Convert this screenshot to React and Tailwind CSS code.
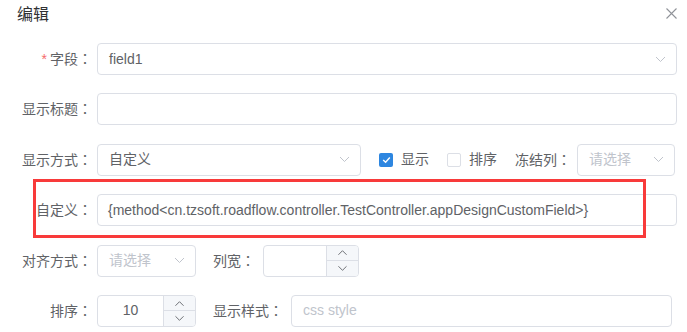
const font = { fontFamily: '"Liberation Sans", "Noto Sans CJK SC", sans-serif' };

// YaHei centres the full-width colon; SC pushes it left, JP centres it
function Colon() {
  return <span className="font-['Noto_Sans_CJK_JP',sans-serif]">：</span>;
}

function Chevron({ up = false, className = '' }) {
  return (
    <svg width="11" height="7" viewBox="0 0 11 7" className={className}>
      <path
        d={up ? 'M1 6 L5.5 1.5 L10 6' : 'M1 1 L5.5 5.5 L10 1'}
        fill="none"
        stroke="currentColor"
        strokeWidth="1"
      />
    </svg>
  );
}

function Label({ children, required }) {
  return (
    <div className="w-[92px] mr-[5px] shrink-0 text-right text-[14px] text-[#606266] [text-spacing-trim:space-all]">
      {required && <span className="text-[#f56c6c] mr-[3px]">*</span>}
      {children}
      <Colon />
    </div>
  );
}

function Select({ value, placeholder, className = '' }) {
  return (
    <div
      className={`h-8 flex items-center justify-between border border-[#dcdfe6] rounded-[4px] pl-[11px] pr-[10px] ${className}`}
    >
      <span className={`text-[14px] ${value ? 'text-[#606266]' : 'text-[#c0c4cc]'}`}>
        {value || placeholder}
      </span>
      <Chevron className="text-[#c0c4cc]" />
    </div>
  );
}

function NumberInput({ value, className = '' }) {
  return (
    <div className={`h-8 flex border border-[#dcdfe6] rounded-[4px] overflow-hidden ${className}`}>
      <div className="flex-1 flex items-center justify-center text-[14px] text-[#606266]">{value}</div>
      <div className="w-[32px] flex flex-col border-l border-[#dcdfe6] bg-[#f5f7fa] text-[#606266]">
        <div className="flex-1 flex items-center justify-center border-b border-[#dcdfe6]">
          <Chevron up className="scale-90" />
        </div>
        <div className="flex-1 flex items-center justify-center">
          <Chevron className="scale-90" />
        </div>
      </div>
    </div>
  );
}

function Checkbox({ checked, label }) {
  return (
    <div className="flex items-center">
      {checked ? (
        <div className="w-[14px] h-[14px] rounded-[2px] bg-[#2d86e0] flex items-center justify-center">
          <svg width="9" height="8" viewBox="0 0 9 8">
            <path d="M1.2 4 L3.6 6.3 L7.8 1.5" fill="none" stroke="white" strokeWidth="1.4" />
          </svg>
        </div>
      ) : (
        <div className="w-[14px] h-[14px] rounded-[2px] border border-[#dcdfe6] bg-white" />
      )}
      <span className="ml-[8px] text-[14px] text-[#606266]">{label}</span>
    </div>
  );
}

export default function App() {
  return (
    <div className="w-[687px] h-[332px] bg-white relative overflow-hidden" style={font}>
      <div className="h-[43px] flex justify-between items-start pl-[17px] pr-[10px]">
        <div className="mt-[5px] text-[16px] leading-[20px] text-[#303133]">编辑</div>
        <svg width="11" height="11" viewBox="0 0 11 11" className="mt-[8px] text-[#909399]">
          <path d="M0.5 0.5 L10.5 10.5 M10.5 0.5 L0.5 10.5" stroke="currentColor" strokeWidth="1.1" />
        </svg>
      </div>

      <div className="flex flex-col gap-[18.4px]">
        <div className="flex items-center">
          <Label required>字段</Label>
          <Select value="field1" className="w-[580px]" />
        </div>

        <div className="flex items-center">
          <Label>显示标题</Label>
          <div className="h-8 w-[580px] border border-[#dcdfe6] rounded-[4px]" />
        </div>

        <div className="flex items-center">
          <Label>显示方式</Label>
          <Select value="自定义" className="w-[264px]" />
          <div className="ml-[18px] flex items-center">
            <Checkbox checked label="显示" />
          </div>
          <div className="ml-[18px]">
            <Checkbox label="排序" />
          </div>
          <span className="ml-[18px] w-[56px] text-[14px] text-[#606266] [text-spacing-trim:space-all]">
            冻结列<Colon />
          </span>
          <Select placeholder="请选择" className="ml-[6px] w-[98px]" />
        </div>

        <div className="flex items-center">
          <Label>自定义</Label>
          <div className="h-8 w-[580px] flex items-center border border-[#dcdfe6] rounded-[4px] px-[10px] text-[14px] text-[#606266]">
            {'{method<cn.tzsoft.roadflow.controller.TestController.appDesignCustomField>}'}
          </div>
        </div>

        <div className="flex items-center">
          <Label>对齐方式</Label>
          <Select placeholder="请选择" className="w-[99px]" />
          <span className="ml-[17px] w-[46px] text-[14px] text-[#606266] [text-spacing-trim:space-all]">
            列宽<Colon />
          </span>
          <NumberInput value="" className="ml-[4px] w-[96px]" />
        </div>

        <div className="flex items-center">
          <Label>排序</Label>
          <NumberInput value="10" className="w-[99px]" />
          <span className="ml-[17px] w-[74px] text-[14px] text-[#606266] [text-spacing-trim:space-all]">
            显示样式<Colon />
          </span>
          <div className="ml-[4px] h-8 w-[381px] flex items-center border border-[#dcdfe6] rounded-[4px] px-[11px] text-[14px] text-[#c0c4cc]">
            css style
          </div>
        </div>
      </div>

      <div className="absolute left-[33px] top-[179px] w-[613px] h-[59px] border-[3px] border-[#f83a3a]" />
    </div>
  );
}
